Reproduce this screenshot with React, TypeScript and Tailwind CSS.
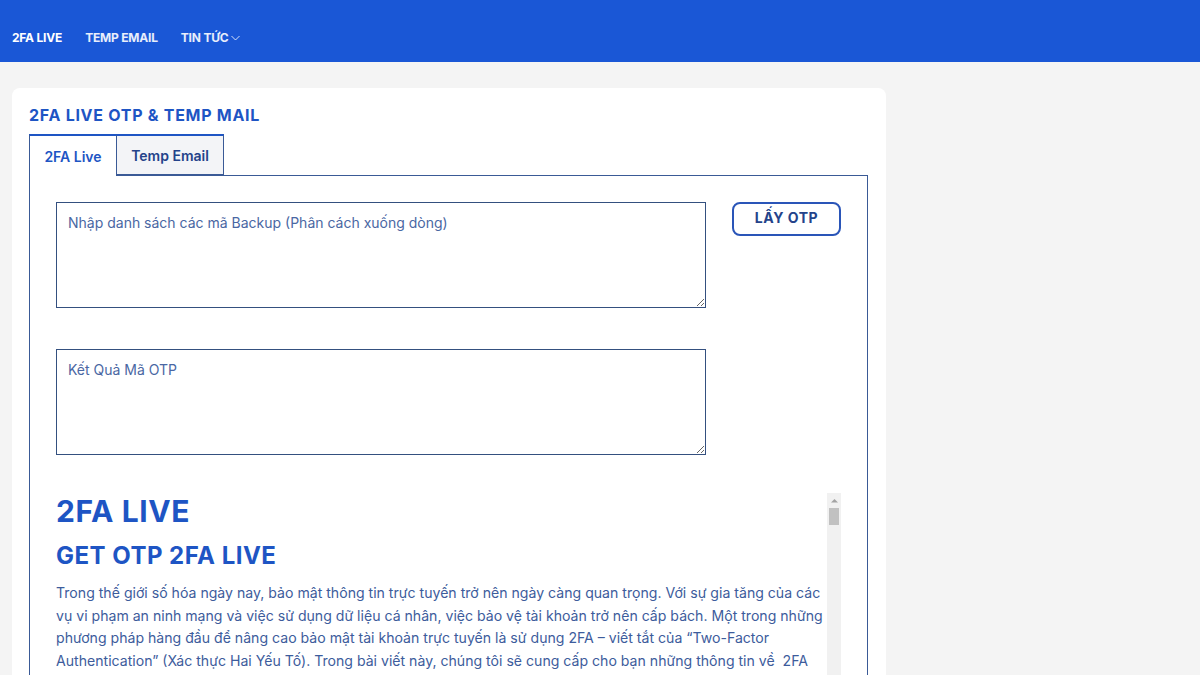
import React from "react";

export default function App() {
  return (
    <div className="min-h-screen bg-[#f4f4f4] font-['Inter','Noto_Sans',sans-serif]">
      <header className="h-[62px] bg-[#1a57d6] flex items-center pt-[14px] px-[12px] gap-[23px]">
        <span className="text-white text-[12px] font-bold tracking-[-0.2px]">2FA LIVE</span>
        <span className="text-white/90 text-[12px] font-bold tracking-[-0.2px]">TEMP EMAIL</span>
        <span className="text-white/90 text-[12px] font-bold tracking-[-0.2px] flex items-center gap-[2px]">
          TIN TỨC
          <svg width="11" height="10" viewBox="0 0 11 10" fill="none" stroke="currentColor" strokeWidth="0.9">
            <path d="M1.5 3 L5.5 7 L9.5 3" />
          </svg>
        </span>
      </header>
      <div className="pt-[26px] pl-[12px]">
        <div className="w-[874px] bg-white rounded-[8px] pl-[17px] pr-[18px] pt-[17px] h-[600px]">
          <h2 className="text-[#1e55c4] text-[16px] font-bold tracking-[0.045em] leading-[20px]">
            2FA LIVE OTP &amp; TEMP MAIL
          </h2>
          <div className="flex mt-[9px]">
            <div className="w-[88px] h-[42px] border border-b-0 border-t-2 border-[#3a5a96] border-t-[#1e55c4] bg-white flex items-center justify-center text-[14px] font-semibold text-[#1e55c4] relative z-10 -mb-px">
              2FA Live
            </div>
            <div className="w-[108px] h-[41px] border border-t-2 border-[#3a5a96] border-t-[#1e55c4] bg-[#f3f4f7] flex items-center justify-center text-[14px] font-semibold text-[#24438a] -ml-px">
              Temp Email
            </div>
          </div>
          <div className="border border-[#3a5a96] h-[520px] pl-[26px] pr-[26px] pt-[26px]">
            <div className="flex items-start gap-[26px]">
              <textarea
                className="w-[650px] h-[106px] border border-[#34507f] px-[11px] py-[11px] text-[14px] leading-[18px] text-[#24438a] placeholder:text-[#4a67a3] outline-none"
                placeholder="Nhập danh sách các mã Backup (Phân cách xuống dòng)"
              />
              <button className="w-[109px] h-[34px] border-2 border-[#2a55b8] rounded-[8px] text-[#24438a] text-[14px] font-bold tracking-[0.04em] pb-[3px]">
                LẤY OTP
              </button>
            </div>
            <textarea
              className="mt-[41px] w-[650px] h-[106px] border border-[#34507f] px-[11px] py-[11px] text-[14px] leading-[18px] text-[#24438a] placeholder:text-[#4a67a3] outline-none block"
              placeholder="Kết Quả Mã OTP"
            />
            <div className="mt-[38px] w-[785px] h-[300px] flex">
              <div className="flex-1 overflow-hidden">
                <h1 className="text-[#1e55c4] text-[30px] font-bold leading-[36px] tracking-[0.02em]">2FA LIVE</h1>
                <h2 className="text-[#1e55c4] text-[24px] font-bold leading-[29px] mt-[12px] tracking-[0.02em]">GET OTP 2FA LIVE</h2>
                <p className="mt-[12px] text-[14.1px] leading-[22.7px] text-[#3d5c9c]">
                  Trong thế giới số hóa ngày nay, bảo mật thông tin trực tuyến trở nên ngày càng quan trọng. Với sự gia tăng của các vụ vi phạm an ninh mạng và việc sử dụng dữ liệu cá nhân, việc bảo vệ tài khoản trở nên cấp bách. Một trong những phương pháp hàng đầu để nâng cao bảo mật tài khoản trực tuyến là sử dụng 2FA – viết tắt của “Two-Factor Authentication” (Xác thực Hai Yếu Tố). Trong bài viết này, chúng tôi sẽ cung cấp cho bạn những thông tin về&nbsp; 2FA Live và cách sử dụng công cụ lấy mã OTP 2FA một cách nhanh chóng, an toàn và hiệu quả nhất.
                </p>
              </div>
              <div className="w-[14px] bg-[#f1f1f1] flex flex-col items-center">
                <div className="h-[14px] w-full flex items-center justify-center">
                  <svg width="7" height="5" viewBox="0 0 7 5">
                    <path d="M0 4.5 L3.5 1 L7 4.5 Z" fill="#a3a3a3" />
                  </svg>
                </div>
                <div className="w-[10px] h-[17px] bg-[#c1c1c1] mt-[1px]" />
              </div>
            </div>
          </div>
        </div>
      </div>
    </div>
  );
}
